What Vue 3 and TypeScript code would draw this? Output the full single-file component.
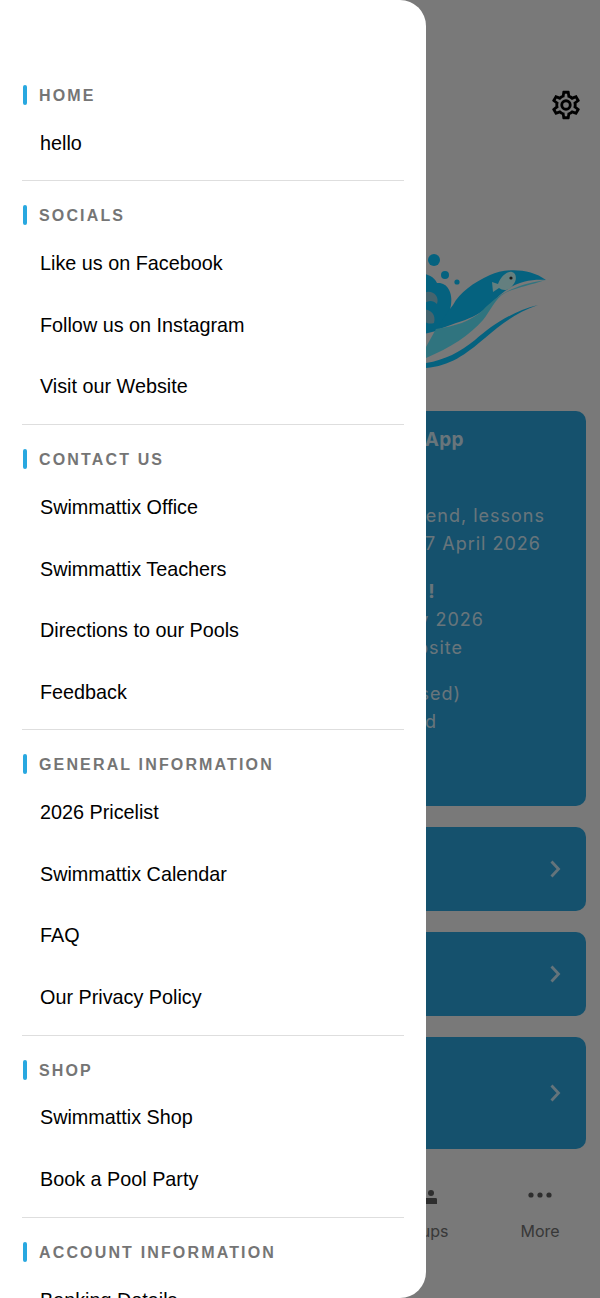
<script setup lang="ts">
interface MenuSection {
    title: string;
    items: string[];
}

interface NoticeLine {
    text: string;
    end: number;
    gap: number;
    bold?: boolean;
}

const sections: MenuSection[] = [
    { title: 'Home', items: ['hello'] },
    { title: 'Socials', items: ['Like us on Facebook', 'Follow us on Instagram', 'Visit our Website'] },
    { title: 'Contact Us', items: ['Swimmattix Office', 'Swimmattix Teachers', 'Directions to our Pools', 'Feedback'] },
    { title: 'General Information', items: ['2026 Pricelist', 'Swimmattix Calendar', 'FAQ', 'Our Privacy Policy'] },
    { title: 'Shop', items: ['Swimmattix Shop', 'Book a Pool Party'] },
    { title: 'Account Information', items: ['Banking Details'] },
];

// right edge of each line in page px, the rest is behind the drawer
const notice: NoticeLine[] = [
    { text: 'App', end: 464, gap: 0, bold: true },
    { text: 'weekend, lessons', end: 545, gap: 48 },
    { text: '27 April 2026', end: 541, gap: 0 },
    { text: '!', end: 435, gap: 20, bold: true },
    { text: 'May 2026', end: 484, gap: 0 },
    { text: 'website', end: 463, gap: 0 },
    { text: 'closed)', end: 461, gap: 18 },
    { text: 'closed', end: 437, gap: 0 },
];

const cardRight = 586;
const linkCards = ['link-sm', 'link-sm', 'link-lg'];
</script>

<template>
    <div class="screen">
        <!-- App behind the drawer -->
        <div class="page">
            <header class="topbar">
                <svg class="gear" viewBox="0 0 24 24" aria-hidden="true">
                    <path d="M12,8A4,4 0 0,1 16,12A4,4 0 0,1 12,16A4,4 0 0,1 8,12A4,4 0 0,1 12,8M12,10A2,2 0 0,0 10,12A2,2 0 0,0 12,14A2,2 0 0,0 14,12A2,2 0 0,0 12,10M10,22C9.75,22 9.54,21.82 9.5,21.58L9.13,18.93C8.5,18.68 7.96,18.34 7.44,17.94L4.95,18.95C4.73,19.03 4.46,18.95 4.34,18.73L2.34,15.27C2.21,15.05 2.27,14.78 2.46,14.63L4.57,12.97L4.5,12L4.57,11L2.46,9.37C2.27,9.22 2.21,8.95 2.34,8.73L4.34,5.27C4.46,5.05 4.73,4.96 4.95,5.05L7.44,6.05C7.96,5.66 8.5,5.32 9.13,5.07L9.5,2.42C9.54,2.18 9.75,2 10,2H14C14.25,2 14.46,2.18 14.5,2.42L14.87,5.07C15.5,5.32 16.04,5.66 16.56,6.05L19.05,5.05C19.27,4.96 19.54,5.05 19.66,5.27L21.66,8.73C21.79,8.95 21.73,9.22 21.54,9.37L19.43,11L19.5,12L19.43,13L21.54,14.63C21.73,14.78 21.79,15.05 21.66,15.27L19.66,18.73C19.54,18.95 19.27,19.04 19.05,18.95L16.56,17.95C16.04,18.34 15.5,18.68 14.87,18.93L14.5,21.58C14.46,21.82 14.25,22 14,22H10M11.25,4L10.88,6.61C9.68,6.86 8.62,7.5 7.85,8.39L5.44,7.35L4.69,8.65L6.8,10.2C6.4,11.37 6.4,12.64 6.8,13.8L4.68,15.36L5.43,16.66L7.86,15.62C8.63,16.5 9.68,17.14 10.87,17.38L11.24,20H12.76L13.13,17.39C14.32,17.14 15.37,16.5 16.14,15.62L18.57,16.66L19.32,15.36L17.2,13.81C17.6,12.64 17.6,11.37 17.2,10.2L19.31,8.65L18.56,7.35L16.15,8.39C15.38,7.5 14.32,6.86 13.12,6.62L12.75,4H11.25Z" />
                </svg>
            </header>

            <!-- Logo, viewBox matches page px. Colours are doubled because the overlay halves them -->
            <svg class="logo" viewBox="400 240 160 150" aria-hidden="true">
                <circle cx="434" cy="260" r="6" fill="#0ac4ff" />
                <circle cx="445" cy="275" r="4" fill="#0ac4ff" />
                <circle cx="457" cy="282" r="2.6" fill="#0ac4ff" />
                <path d="M400 280C415 270 432 272 437 283C447 282 453 292 451 305C449 318 443 325 436 331L400 340Z" fill="#0ac4ff" />
                <path d="M424 293C431 289 440 295 437 304C433 300 428 300 424 304ZM418 310C428 307 437 313 434 323C428 325 420 322 418 310Z" fill="#8cc8dc" />
                <path d="M437 329C442 320 446 314 453 305C460 292 473 283 490 275C505 268 530 268 546 280C530 279 515 282 500 295C490 305 483 315 456 323C450 325 443 328 437 330Z" fill="#0ac4ff" />
                <path d="M400 352L426 347L436 329C455 326 470 322 483 310C495 298 510 285 546 280C530 285 515 288 505 293C495 298 490 312 483 320C470 335 450 348 426 358L400 364Z" fill="#60e8ff" />
                <path d="M400 368L426 363C445 360 460 352 475 340C490 327 510 312 538 305C515 313 500 325 485 338C465 355 450 366 426 368L400 371Z" fill="#0ac4ff" />
                <path d="M492 282L498 284C501 276 507 271 512 272C517 273 517 281 513 285C509 291 503 291 499 288L493 292Z" fill="#c8ffff" />
                <circle cx="511" cy="278" r="1.6" fill="#333" />
            </svg>

            <section class="notice">
                <div
                    v-for="line in notice"
                    :key="line.text + line.end"
                    class="notice-line"
                    :class="{ bold: line.bold }"
                    :style="{ paddingRight: cardRight - line.end + 'px', marginTop: line.gap + 'px' }"
                >{{ line.text }}</div>
            </section>

            <div v-for="(card, i) in linkCards" :key="i" class="link-card" :class="card">
                <svg class="chevron" viewBox="0 0 12 20" aria-hidden="true">
                    <path d="M2.5 2.5L9.5 10L2.5 17.5" />
                </svg>
            </div>

            <nav class="tabbar">
                <div class="tab tab-groups">
                    <svg class="tab-icon" viewBox="0 0 28 24" aria-hidden="true">
                        <circle cx="24" cy="10" r="3" />
                        <path d="M2 21C2 17 5 15 9 15V21ZM19 15H29C30 15 30 16 30 17V21H19Z" />
                    </svg>
                    <span>Groups</span>
                </div>
                <div class="tab tab-more">
                    <svg class="tab-icon" viewBox="0 0 24 24" aria-hidden="true">
                        <circle cx="3" cy="12" r="2.6" />
                        <circle cx="12" cy="12" r="2.6" />
                        <circle cx="21" cy="12" r="2.6" />
                    </svg>
                    <span>More</span>
                </div>
            </nav>
        </div>

        <div class="overlay"></div>

        <!-- Drawer -->
        <aside class="drawer">
            <div v-for="section in sections" :key="section.title" class="section">
                <h2 class="section-title">{{ section.title }}</h2>
                <a v-for="item in section.items" :key="item" class="item">{{ item }}</a>
            </div>
        </aside>
    </div>
</template>

<style scoped>
* { box-sizing: border-box; }

.screen {
    position: relative;
    width: 600px;
    height: 1298px;
    overflow: hidden;
    background: #f2f2f2;
}

.page {
    display: flex;
    flex-direction: column;
    height: 100%;
    padding: 0 14px;
    font-family: Inter, sans-serif;
}
.topbar { display: flex; justify-content: flex-end; height: 240px; padding: 88px 3px 0 0; }
.gear { width: 34px; height: 34px; fill: #000; }
.logo { display: block; width: 160px; height: 150px; margin: 0 0 21px 386px; flex-shrink: 0; overflow: visible; }

.notice {
    height: 395px;
    flex-shrink: 0;
    padding-top: 15px;
    border-radius: 10px;
    background: #2aa2da;
    font-size: 18px;
    line-height: 28px;
    letter-spacing: 1px;
    text-align: right;
}
.notice-line { white-space: nowrap; color: rgba(255, 255, 255, .8); }
.notice-line.bold { font-weight: 700; font-size: 19px; letter-spacing: .4px; }

.link-card {
    display: flex;
    align-items: center;
    justify-content: flex-end;
    flex-shrink: 0;
    padding-right: 25px;
    border-radius: 10px;
    background: #2aa2da;
}
.link-sm { height: 84px; margin-top: 21px; }
.link-lg { height: 112px; margin-top: 21px; }
.chevron { width: 12px; height: 20px; fill: none; stroke: #fff; stroke-opacity: .75; stroke-width: 2.8; }

.tabbar { display: flex; justify-content: flex-end; margin-top: 34px; color: #707070; font-size: 16px; }
.tab { display: flex; flex-direction: column; align-items: center; gap: 14px; }
.tab-groups { width: 120px; }
.tab-more { width: 92px; margin-left: 13px; }
.tab-icon { width: 24px; height: 24px; fill: #5c5c5c; overflow: visible; }
.tab-groups .tab-icon { width: 28px; }

.overlay { position: absolute; inset: 0; background: rgba(0, 0, 0, .5); }

.drawer {
    position: absolute;
    top: 0;
    left: 0;
    bottom: 0;
    width: 426px;
    padding: 84px 22px 0;
    overflow: hidden;
    border-radius: 0 26px 26px 0;
    background: #fff;
    font-family: "Liberation Sans", Arial, sans-serif;
}

.section { padding-bottom: 6.4px; margin-bottom: 23px; border-bottom: 1px solid #dedede; }
.section:last-child { border-bottom: 0; }

.section-title {
    position: relative;
    margin: 0 0 4.5px;
    padding-left: 17px;
    font-size: 16px;
    font-weight: 700;
    line-height: 24px;
    letter-spacing: 2.15px;
    text-transform: uppercase;
    color: #757575;
}
.section-title::before {
    content: '';
    position: absolute;
    left: .5px;
    top: 1px;
    width: 4px;
    height: 20px;
    border-radius: 2px;
    background: #29a8e0;
}

.item {
    display: flex;
    align-items: center;
    height: 61.6px;
    padding-left: 18px;
    font-size: 19.8px;
    color: #000;
}
</style>

<style>
html, body { margin: 0; background: #797979; overflow: hidden; }
</style>
